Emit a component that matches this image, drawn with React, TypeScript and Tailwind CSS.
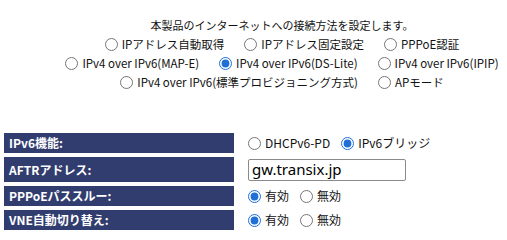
const font = { fontFamily: '"Noto Sans CJK JP", "Noto Sans", sans-serif' };

type Opt = { label: string; checked?: boolean };

const modeRows: Opt[][] = [
  [{ label: "IPアドレス自動取得" }, { label: "IPアドレス固定設定" }, { label: "PPPoE認証" }],
  [
    { label: "IPv4 over IPv6(MAP-E)" },
    { label: "IPv4 over IPv6(DS-Lite)", checked: true },
    { label: "IPv4 over IPv6(IPIP)" },
  ],
  [{ label: "IPv4 over IPv6(標準プロビジョニング方式)" }, { label: "APモード" }],
];

const Radio = ({ name, label, checked }: { name: string; label: string; checked?: boolean }) => (
  <label className="flex items-center gap-[4px] whitespace-nowrap">
    <input
      type="radio"
      name={name}
      defaultChecked={checked}
      className="w-[13px] h-[13px] accent-[#1f6fd6]"
    />
    <span>{label}</span>
  </label>
);

const Label = ({ children }: { children: React.ReactNode }) => (
  <div className="flex items-center bg-[#313d6f] text-white font-bold text-[12px] pl-[5px]">
    {children}
  </div>
);

export default function App() {
  return (
    <div className="w-[507px] h-[233px] bg-white text-[#111] overflow-hidden" style={font}>
      {/* Connection mode */}
      <div className="pt-[16px] pl-[57px] text-center text-[11.5px]">
        <p className="h-[19px] leading-[19px] text-[11px]">本製品のインターネットへの接続方法を設定します。</p>
        {modeRows.map((row, i) => (
          <div key={i} className="flex justify-center gap-[20px] h-[19px]">
            {row.map((o) => (
              <Radio key={o.label} name="mode" label={o.label} checked={o.checked} />
            ))}
          </div>
        ))}
      </div>

      {/* Settings table */}
      <div className="mt-[41px] pl-[4px] grid grid-cols-[230px_1fr] gap-x-[14px] gap-y-[4px] text-[12px]">
        <Label>IPv6機能:</Label>
        <div className="flex items-center gap-[11px] h-[20px]">
          <Radio name="v6" label="DHCPv6-PD" />
          <Radio name="v6" label="IPv6ブリッジ" checked />
        </div>

        <Label>AFTRアドレス:</Label>
        <div className="flex items-center h-[25px]">
          <input
            type="text"
            defaultValue="gw.transix.jp"
            className="w-[158px] h-[22px] border border-[#8a8a8a] rounded-[2px] px-[3px] text-[15px] text-black outline-none"
            style={{ fontFamily: '"Noto Sans", sans-serif' }}
          />
        </div>

        <Label>PPPoEパススルー:</Label>
        <div className="flex items-center gap-[11px] h-[20px]">
          <Radio name="pass" label="有効" checked />
          <Radio name="pass" label="無効" />
        </div>

        <Label>VNE自動切り替え:</Label>
        <div className="flex items-center gap-[11px] h-[20px]">
          <Radio name="vne" label="有効" checked />
          <Radio name="vne" label="無効" />
        </div>
      </div>
    </div>
  );
}
